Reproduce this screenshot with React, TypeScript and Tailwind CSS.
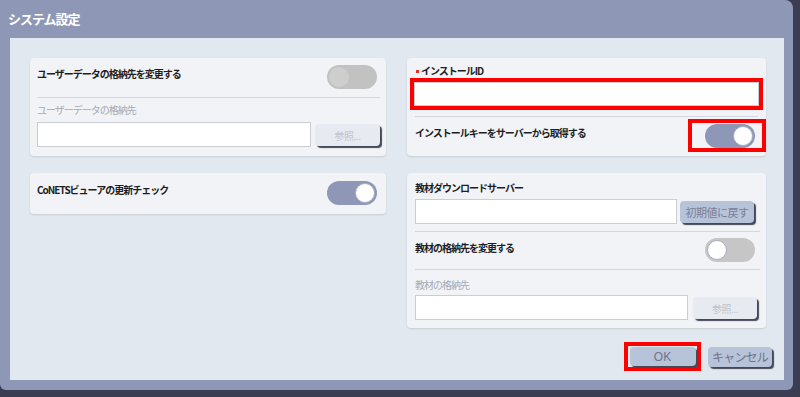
const jp = { fontFamily: '"Noto Sans CJK JP", "Noto Sans", sans-serif' };

function Toggle({ mode }: { mode: "on" | "off" | "disabled" }) {
  const track =
    mode === "on" ? "bg-[#8e98b6] justify-end" : mode === "off" ? "bg-[#c6c6c6] justify-start" : "bg-[#c2c2c2] justify-start";
  const knob = mode === "disabled" ? "bg-[#cecece]" : "bg-white border border-[#a9aec0]";
  return (
    <div className={`w-[50px] h-[24px] rounded-full flex items-center px-[2px] ${track}`}>
      <div className={`w-[20px] h-[20px] rounded-full ${knob}`} />
    </div>
  );
}

function Label({ children, muted, className = "" }: { children: React.ReactNode; muted?: boolean; className?: string }) {
  return (
    <div
      className={`text-[10px] leading-[12px] tracking-[-1px] ${muted ? "text-[#a6aab3]" : "font-bold text-[#1e1e22]"} ${className}`}
      style={jp}
    >
      {children}
    </div>
  );
}

function Input({ w }: { w: string }) {
  return <div className={`${w} h-[25px] bg-white border border-[#c9cdd5]`} />;
}

function Btn({ children, w, disabled }: { children: React.ReactNode; w: string; disabled?: boolean }) {
  return (
    <div
      className={`${w} h-[22px] mt-[2px] rounded-[4px] flex items-center justify-center tracking-[-0.5px] shadow-[2px_2px_1px_#444857] ${
        disabled ? "bg-[#e7eaf0] text-[#bfc3cc] text-[10px]" : "bg-[#b7c3d9] text-[#7a8096] text-[11px]"
      }`}
      style={jp}
    >
      {children}
    </div>
  );
}

function Divider() {
  return <div className="h-px bg-[#d2d8e2]" />;
}

export default function App() {
  return (
    <div className="w-[800px] h-[397px] bg-[#3b3e52] overflow-hidden">
      <div className="w-[793px] h-[390px] bg-[#8e98b6] rounded-tr-[8px] rounded-b-[6px] flex flex-col">
        <div className="h-[38px] flex items-center pl-[8px] text-white font-bold text-[13px] tracking-[-1px]" style={jp}>
          システム設定
        </div>

        <div className="ml-[10px] w-[774px] h-[342px] bg-[#e2e8ef] pt-[20px] pl-[20px] pr-[12px] flex flex-col">
          <div className="flex gap-[21px]">
            {/* left column */}
            <div className="w-[356px] flex flex-col gap-[17px]">
              <div className="h-[98px] bg-[#f1f3f6] rounded-[4px] shadow-[0_1px_2px_rgba(0,0,0,0.12)] pl-[7px] pr-[6px] flex flex-col">
                <div className="h-[39px] flex justify-between items-start pr-[3px]">
                  <Label className="mt-[10px]">ユーザーデータの格納先を変更する</Label>
                  <div className="mt-[7px]">
                    <Toggle mode="disabled" />
                  </div>
                </div>
                <Divider />
                <Label muted className="mt-[6px]">ユーザーデータの格納先</Label>
                <div className="flex gap-[4px] mt-[6px]">
                  <Input w="w-[274px]" />
                  <Btn w="w-[65px]" disabled>参照...</Btn>
                </div>
              </div>

              <div className="h-[41px] bg-[#f1f3f6] rounded-[4px] shadow-[0_1px_2px_rgba(0,0,0,0.12)] pl-[7px] pr-[9px] flex justify-between items-start">
                <Label className="mt-[11px]">CoNETSビューアの更新チェック</Label>
                <div className="mt-[8px]">
                  <Toggle mode="on" />
                </div>
              </div>
            </div>

            {/* right column */}
            <div className="w-[359px] flex flex-col gap-[17px]">
              <div className="h-[98px] bg-[#f1f3f6] rounded-[4px] shadow-[0_1px_2px_rgba(0,0,0,0.12)] flex flex-col">
                <Label className="mt-[7px] ml-[9px] flex items-center">
                  <span className="inline-block w-[3px] h-[3px] bg-[#e0302a] mr-[2px]" />
                  インストールID
                </Label>
                <div className="mx-[3px] mt-[1px] h-[32px] border-[4px] border-[#ff0000]">
                  <div className="h-full bg-white border border-[#c9cdd5]" />
                </div>
                <div className="mx-[8px] mt-[6px]">
                  <Divider />
                </div>
                <div className="flex justify-between items-start pl-[8px] mt-[2px]">
                  <Label className="mt-[8px]">インストールキーをサーバーから取得する</Label>
                  <div className="w-[78px] h-[33px] border-[4px] border-[#ff0000] flex items-center justify-end pr-[7px]">
                    <Toggle mode="on" />
                  </div>
                </div>
              </div>

              <div className="h-[155px] bg-[#f1f3f6] rounded-[4px] shadow-[0_1px_2px_rgba(0,0,0,0.12)] pl-[8px] pr-[6px] flex flex-col">
                <Label className="mt-[9px]">教材ダウンロードサーバー</Label>
                <div className="flex gap-[3px] mt-[5px]">
                  <Input w="w-[262px]" />
                  <Btn w="w-[74px]">初期値に戻す</Btn>
                </div>
                <div className="mt-[7px]">
                  <Divider />
                </div>
                <div className="h-[37px] flex justify-between items-start pr-[5px]">
                  <Label className="mt-[10px]">教材の格納先を変更する</Label>
                  <div className="mt-[6px]">
                    <Toggle mode="off" />
                  </div>
                </div>
                <Divider />
                <Label muted className="mt-[9px]">教材の格納先</Label>
                <div className="flex gap-[5px] mt-[4px]">
                  <Input w="w-[273px]" />
                  <Btn w="w-[64px]" disabled>参照...</Btn>
                </div>
              </div>
            </div>
          </div>

          <div className="flex justify-end items-center gap-[7px] mt-[14px]">
            <div className="w-[77px] h-[29px] border-[4px] border-[#ff0000] flex items-center justify-center">
              <div
                className="w-[66px] h-[19px] rounded-[4px] bg-[#b7c3d9] text-[#6f748a] text-[12px] flex items-center justify-center shadow-[2px_2px_1px_#444857]"
                style={{ fontFamily: '"Liberation Sans", Arial, sans-serif' }}
              >
                OK
              </div>
            </div>
            <div
              className="w-[64px] h-[20px] rounded-[4px] bg-[#b7c3d9] text-[#6f748a] text-[12px] tracking-[-0.8px] flex items-center justify-center shadow-[2px_2px_1px_#444857]"
              style={jp}
            >
              キャンセル
            </div>
          </div>
        </div>
      </div>
    </div>
  );
}
